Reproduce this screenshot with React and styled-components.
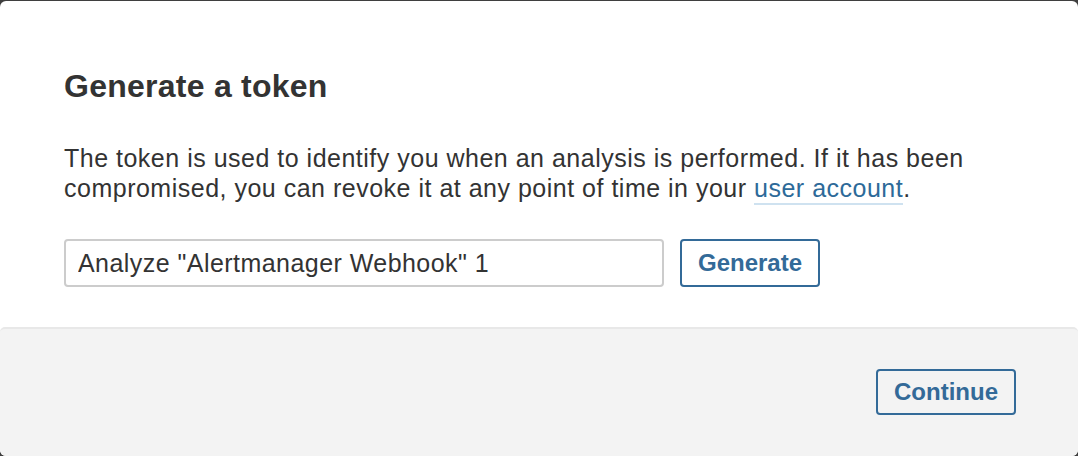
import React from 'react';
import styled, { createGlobalStyle } from 'styled-components';

const GlobalStyle = createGlobalStyle`
  html, body {
    margin: 0;
    padding: 0;
    background: #3f3f3f;
    height: 456px;
    overflow: hidden;
  }
  body {
    font-family: "Liberation Sans", Arial, sans-serif;
    color: #333333;
  }
`;

const Modal = styled.div`
  margin-top: 1px;
  height: 455px;
  background: #ffffff;
  border-radius: 6px;
  overflow: hidden;
  display: flex;
  flex-direction: column;
`;

const Body = styled.div`
  padding: 66px 64px 40px 64px;
`;

const Title = styled.h2`
  margin: 0 0 38px 0;
  font-size: 32px;
  line-height: 38px;
  letter-spacing: 0.25px;
  font-weight: bold;
  color: #333333;
`;

const Text = styled.p`
  margin: 0 0 36px 0;
  font-size: 25px;
  line-height: 30px;
  letter-spacing: 0.5px;
  color: #333333;
`;

const Link = styled.a`
  color: #2d6a99;
  text-decoration: none;
  border-bottom: 2px solid #cfe2f0;
  padding-bottom: 1px;
`;

const Row = styled.div`
  display: flex;
  align-items: center;
  gap: 16px;
`;

const Input = styled.input`
  box-sizing: border-box;
  width: 600px;
  height: 48px;
  padding: 0 12px;
  border: 2px solid #cccccc;
  border-radius: 4px;
  font-family: "Liberation Sans", Arial, sans-serif;
  font-size: 25px;
  letter-spacing: 0.45px;
  color: #333333;
  background: #ffffff;
  outline: none;
`;

const Button = styled.button`
  box-sizing: border-box;
  height: ${props => props.h || 48}px;
  padding: 0 16px;
  background: transparent;
  border: 2px solid #336a98;
  border-radius: 4px;
  color: #336a98;
  font-family: "Liberation Sans", Arial, sans-serif;
  font-size: 24px;
  font-weight: bold;
  cursor: pointer;
`;

const Footer = styled.div`
  flex: 1;
  background: #f3f3f3;
  border-top: 2px solid #e8e8e8;
  border-radius: 5px 5px 0 0;
  display: flex;
  justify-content: flex-end;
  align-items: flex-start;
  padding: 40px 62px 0 0;
`;

export default function App() {
  return (
    <>
      <GlobalStyle />
      <Modal>
        <Body>
          <Title>Generate a token</Title>
          <Text>
            The token is used to identify you when an analysis is performed. If it has been
            compromised, you can revoke it at any point of time in your <Link href="#">user account</Link>.
          </Text>
          <Row>
            <Input defaultValue={'Analyze "Alertmanager Webhook" 1'} />
            <Button>Generate</Button>
          </Row>
        </Body>
        <Footer>
          <Button h={46}>Continue</Button>
        </Footer>
      </Modal>
    </>
  );
}
